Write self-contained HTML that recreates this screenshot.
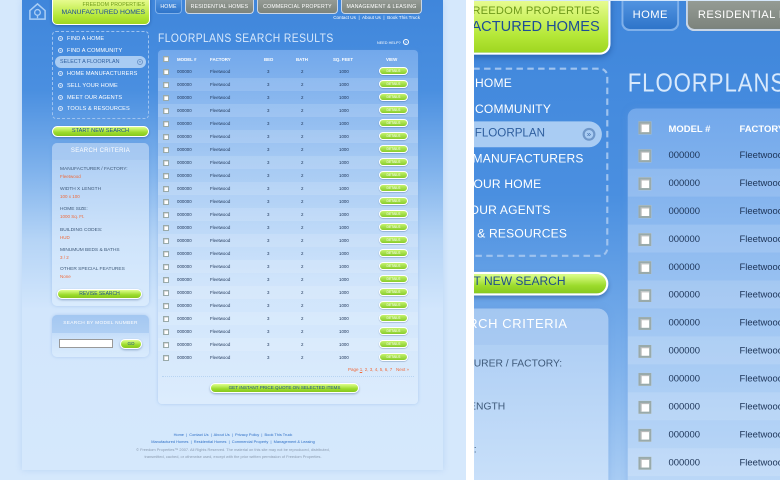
<!DOCTYPE html>
<html><head><meta charset="utf-8">
<style>
*{margin:0;padding:0;box-sizing:border-box}
html,body{width:780px;height:480px;overflow:hidden}
body{background:#fff;position:relative;font-family:"Liberation Sans",sans-serif}
.frame{position:absolute;top:0;height:480px;overflow:hidden;background:#d5e8fc}
#f1{left:0;width:466px}
#f2{left:474px;width:306px}
.pg{position:absolute;left:0;top:0;width:466px;height:480px;overflow:hidden;background:#d5e8fc;transform-origin:0 0}
#f2 .pg{transform:translate(-186px,1px) scale(2.15)}
.ab{position:absolute}
.cont{left:22px;top:0;width:421px;height:470px;background:linear-gradient(#3f86db 0,#4a8fe0 90px,#7fb2ec 170px,#b5d4f6 240px,#d2e6fc 310px,#d5e8fc 470px);box-shadow:0 0 6px rgba(120,170,230,.3)}
.logo{left:28px;top:2px;width:19px;height:19px}
.gbox{left:52px;top:-3px;width:98px;height:28px;background:linear-gradient(#f0ffa0,#b5e838 70%,#9fd620);border:1.5px solid #fff;border-top:none;border-radius:0 0 5px 5px;text-align:right;padding:5px 4px 0 0;box-shadow:0 1px 3px rgba(0,40,100,.4);white-space:nowrap}
.gbox .a{font-size:5.2px;color:#6f9a1a;letter-spacing:.1px;line-height:7px}
.gbox .b{font-size:6.8px;color:#1d4d96;line-height:8px}
.tab{top:-3px;height:17px;border-radius:0 0 4px 4px;color:#fff;font-size:5.2px;text-align:center;padding-top:6.5px;border:1px solid #c9d6e6;border-top:none;letter-spacing:.2px;white-space:nowrap}
.tab.g{background:linear-gradient(#9aa19a,#7c837c)}
.tab.h{background:linear-gradient(#5a9be6,#2e74c9);border-color:#7fb0ea}
.tlinks{left:290px;top:15px;width:130px;text-align:right;font-size:4.6px;color:#fff}
.nav{left:52px;top:31px;width:97px;height:88px;border:1px dashed #9fc3ef;border-radius:4px}
.nv{left:58px;font-size:5.6px;color:#fff;letter-spacing:.1px;white-space:nowrap}
.nv i{display:inline-block;width:5px;height:5px;border:.6px solid #cfe2fa;border-radius:50%;margin-right:4px;vertical-align:0;font-style:normal;font-size:4px;line-height:4px;text-align:center}
.sel{left:55px;top:56px;width:91px;height:11.5px;border-radius:6px;background:#a9ccf3;color:#2f5f9f;font-size:5.4px;padding:3px 0 0 5px;white-space:nowrap}
.sel b{position:absolute;right:3px;top:2.5px;width:6px;height:6px;border:.5px solid #6f97c9;border-radius:50%;font-size:3.5px;line-height:5px;text-align:center;font-weight:normal}
.gb{background:linear-gradient(#dfff8c,#9cdb2c 60%,#86c81e);border:1px solid #fff;border-radius:6px;color:#1f4f8a;text-align:center;box-shadow:0 1px 2px rgba(0,40,100,.35);white-space:nowrap}
.panel{background:linear-gradient(#a9cbf3,#cfe4fb 60%,#d9ebfd);border-radius:5px;box-shadow:0 0 3px rgba(100,150,220,.35)}
.ph{color:#fff;font-size:6px;text-align:center;letter-spacing:.3px}
.cl{left:60px;font-size:4.8px;color:#3f5a7a;line-height:6.5px;white-space:nowrap}
.cl span{color:#f06a3a;display:block;font-size:4.5px}
.title{left:158px;top:31px;font-size:12px;color:#d8e9fc;letter-spacing:.5px;white-space:nowrap;transform:scaleX(.86);transform-origin:0 0}
.help{left:377px;top:39px;font-size:3.8px;color:#fff}
.help i{display:inline-block;width:6px;height:6px;border:.6px solid #fff;border-radius:50%;font-style:normal;text-align:center;line-height:5px;font-size:4px;margin-left:1px}
.tbl{left:158px;top:50px;width:260px;height:354px;border-radius:4px;background:linear-gradient(#72a8eb,#a3c8f3 30%,#cfe4fb 65%,#dcecfd);box-shadow:0 0 3px rgba(100,150,220,.35);overflow:hidden}
.row{position:absolute;left:0;width:260px;height:13px;font-size:4.4px;color:#1c3356}
.row:nth-child(odd){background:rgba(255,255,255,.13)}
.row span{position:absolute;top:4.4px}
.row .cb{left:5px;top:3.5px;width:6px;height:6px;background:#fff;border:.5px solid #9aa;box-shadow:inset .5px .5px 0 #bbb}
.row .c1{left:19px}.row .c2{left:52px}.row .c3{left:109px}.row .c4{left:143px}.row .c5{left:181px}
.row .dt{left:221px;top:2.3px;width:29px;height:8px;border-radius:4px;background:linear-gradient(#c4f26c,#88cc2a);border:.7px solid #fff;color:#fff;font-size:3.4px;text-align:center;line-height:6.5px;box-shadow:0 .5px 1px rgba(0,40,100,.4)}
.hdr{top:3px;font-weight:bold;color:#fff;background:none!important}
.foot{left:0;width:466px;text-align:center;font-size:3.9px;color:#2d6fc6;line-height:7.4px}
.foot .g{color:#8a9aae}
</style></head><body>
<div class="frame" id="f1"><div class="pg" id="pg">
<div class="ab cont"></div>
<svg class="ab logo" viewBox="0 0 20 20"><path d="M2 9 L10 2 L18 9 L18 18 L2 18 Z" fill="none" stroke="#a9cdf5" stroke-width="1.6"/><circle cx="10" cy="11" r="3" fill="none" stroke="#a9cdf5" stroke-width="1.4"/><path d="M10 14v3" stroke="#a9cdf5" stroke-width="1.4"/></svg>
<div class="ab gbox"><div class="a">FREEDOM PROPERTIES</div><div class="b">MANUFACTURED HOMES</div></div>
<div class="ab tab h" style="left:155px;width:27px">HOME</div>
<div class="ab tab g" style="left:185px;width:69px">RESIDENTIAL HOMES</div>
<div class="ab tab g" style="left:257px;width:81px">COMMERCIAL PROPERTY</div>
<div class="ab tab g" style="left:341px;width:81px">MANAGEMENT &amp; LEASING</div>
<div class="ab tlinks">Contact Us &nbsp;|&nbsp; About Us &nbsp;|&nbsp; Book This Truck</div>
<div class="ab nav"></div>
<div class="ab nv" style="top:36px"><i>+</i>FIND A HOME</div>
<div class="ab nv" style="top:47.5px"><i>+</i>FIND A COMMUNITY</div>
<div class="ab sel">SELECT A FLOORPLAN<b>»</b></div>
<div class="ab nv" style="top:71px"><i>+</i>HOME MANUFACTURERS</div>
<div class="ab nv" style="top:83px"><i>+</i>SELL YOUR HOME</div>
<div class="ab nv" style="top:94.5px"><i>+</i>MEET OUR AGENTS</div>
<div class="ab nv" style="top:106px"><i>+</i>TOOLS &amp; RESOURCES</div>
<div class="ab gb" style="left:52px;top:126px;width:97px;height:11px;font-size:5.6px;line-height:9px">START NEW SEARCH</div>
<div class="ab panel" style="left:52px;top:143px;width:97px;height:163px"></div>
<div class="ab" style="left:52px;top:143px;width:97px;height:17px;background:rgba(160,196,240,.5);border-radius:5px 5px 0 0"></div>
<div class="ab ph" style="left:52px;top:148px;width:97px">SEARCH CRITERIA</div>
<div class="ab cl" style="top:167px">MANUFACTURER / FACTORY:<span>Fleetwood</span></div>
<div class="ab cl" style="top:187px">WIDTH X LENGTH<span>100 x 100</span></div>
<div class="ab cl" style="top:207px">HOME SIZE:<span>1000 Sq. Ft.</span></div>
<div class="ab cl" style="top:228px">BUILDING CODES:<span>HUD</span></div>
<div class="ab cl" style="top:248px">MINUMUM BEDS &amp; BATHS<span>3 / 2</span></div>
<div class="ab cl" style="top:267px">OTHER SPECIAL FEATURES<span>None</span></div>
<div class="ab gb" style="left:57px;top:289px;width:85px;height:10px;font-size:5px;line-height:8px">REVISE SEARCH</div>
<div class="ab panel" style="left:52px;top:315px;width:97px;height:42px"></div>
<div class="ab" style="left:52px;top:315px;width:97px;height:18px;background:rgba(160,196,240,.6);border-radius:5px 5px 0 0"></div>
<div class="ab ph" style="left:52px;top:321px;width:97px;font-size:4.8px">SEARCH BY MODEL NUMBER</div>
<div class="ab" style="left:59px;top:339px;width:54px;height:9px;background:#fff;border:.7px solid #999"></div>
<div class="ab gb" style="left:120px;top:339px;width:22px;height:10px;font-size:4.5px;line-height:8px">GO</div>
<div class="ab title">FLOORPLANS SEARCH RESULTS</div>
<div class="ab help">NEED HELP? <i>?</i></div>
<div class="ab tbl" id="tbl">
<div class="row hdr"><span class="cb" style="top:3px"></span><span class="c1" style="top:4px">MODEL #</span><span class="c2" style="top:4px">FACTORY</span><span class="c3" style="top:4px;left:106px">BED</span><span class="c4" style="top:4px;left:138px">BATH</span><span class="c5" style="top:4px;left:175px">SQ. FEET</span><span style="left:228px;top:4px">VIEW</span></div>
</div>
<div class="ab" style="left:275px;top:367px;width:134px;text-align:right;font-size:4.5px;color:#f06a3a">Page <u>1</u>, 2, 3, 4, 5, 6, 7 &nbsp; Next »</div>
<div class="ab" style="left:162px;top:376px;width:252px;border-top:.5px dotted #b8d4f2"></div>
<div class="ab gb" style="left:210px;top:383px;width:149px;height:10px;font-size:4.6px;line-height:8px">GET INSTANT PRICE QUOTE ON SELECTED ITEMS</div>
<div class="ab foot" style="top:431px">Home &nbsp;|&nbsp; Contact Us &nbsp;|&nbsp; About Us &nbsp;|&nbsp; Privacy Policy &nbsp;|&nbsp; Book This Truck<br>Manufactured Homes &nbsp;|&nbsp; Residential Homes &nbsp;|&nbsp; Commercial Property &nbsp;|&nbsp; Management &amp; Leasing<br><span class="g">© Freedom Properties™ 2007. All Rights Reserved. The material on this site may not be reproduced, distributed,<br>transmitted, cached, or otherwise used, except with the prior written permission of Freedom Properties.</span></div>
</div></div>
<div class="frame" id="f2"></div>
<script>
var t=document.getElementById('tbl');
for(var i=0;i<23;i++){var r=document.createElement('div');r.className='row';r.style.top=(15+i*13)+'px';
r.innerHTML='<span class="cb"></span><span class="c1">000000</span><span class="c2">Fleetwood</span><span class="c3">3</span><span class="c4">2</span><span class="c5">1000</span><span class="dt">DETAILS</span>';t.appendChild(r);}
var c=document.getElementById('pg').cloneNode(true);c.id='pg2';document.getElementById('f2').appendChild(c);
</script>
</body></html>
